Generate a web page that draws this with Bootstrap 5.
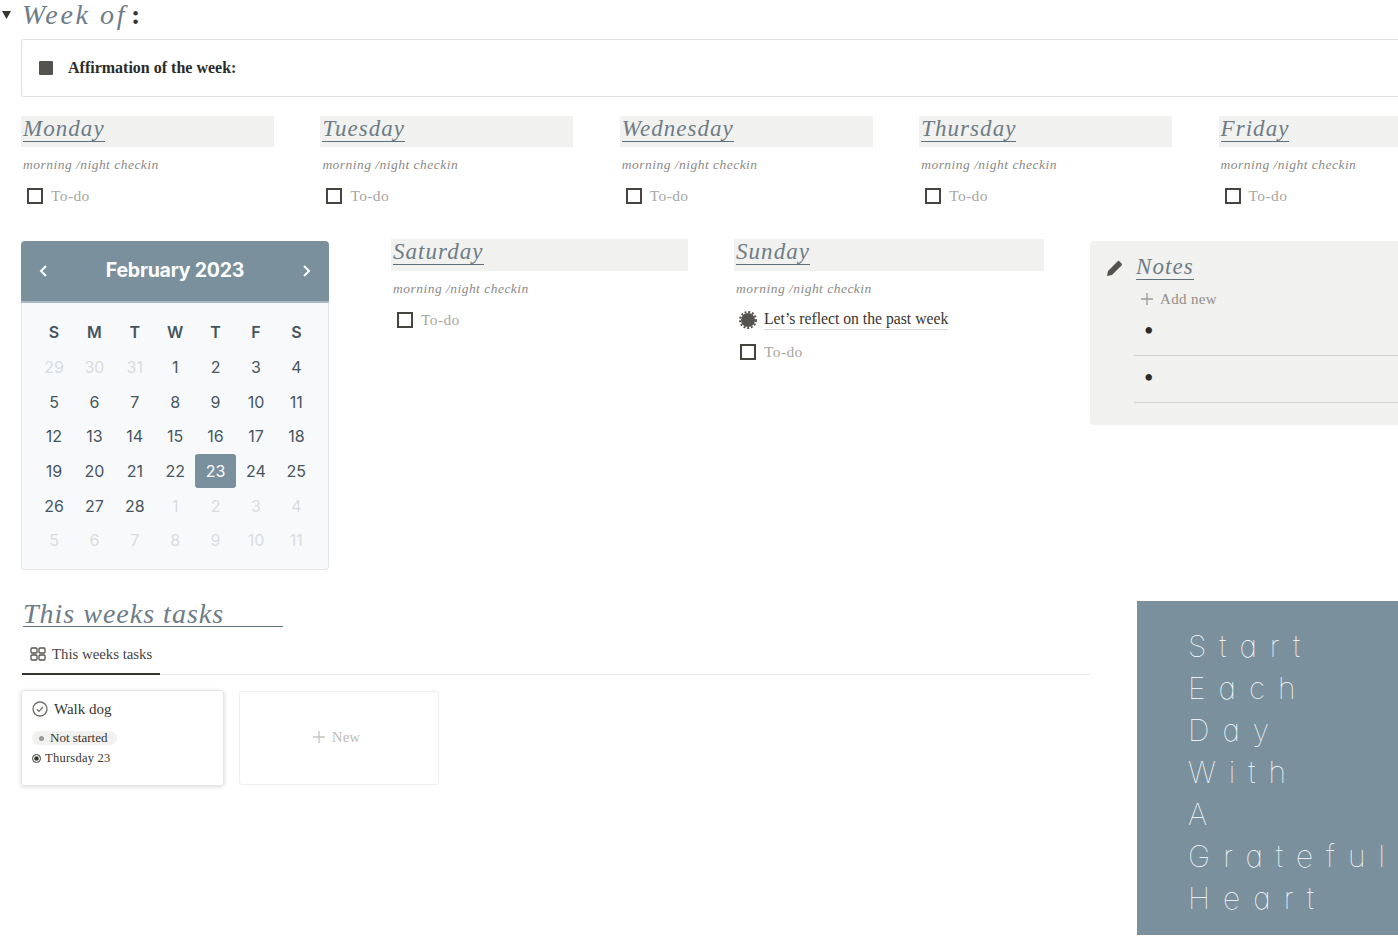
<!DOCTYPE html>
<html lang="en">
<head>
<meta charset="utf-8">
<title>Week of</title>
<link href="https://cdn.jsdelivr.net/npm/bootstrap@5.3.0/dist/css/bootstrap.min.css" rel="stylesheet">
<style>
html,body{height:948px;overflow:hidden;background:#fff}
body{font-family:"Liberation Serif",serif;color:#37352f}
.pageroot{width:1480px;padding-left:21px}
.wk-title{height:39px;margin-left:-21px;gap:10px;padding-left:2px;padding-bottom:10px}
.wk-title h1{font:italic 400 28px/30px "Liberation Serif",serif;letter-spacing:2.6px;color:#6d7c86;margin:0}
.wk-title b{font-style:normal;color:#37352f;margin-left:4px}
.affirm{height:58px;border:1px solid #e0e0df;border-radius:3px;padding-left:17px;gap:15px;font:700 16px "Liberation Serif",serif;color:#2c2b28}
.sq{width:14px;height:14px;background:#55534e;border-radius:1px}
.dayrow{margin-top:19px;gap:46.4px}
.daycol{width:253px}
.dayhead{height:31px;background:#f1f1ef;padding:0 2px}
.dayhead span{display:inline-block;height:26px;font:italic 400 23px/25px "Liberation Serif",serif;letter-spacing:1.05px;color:#6d7c86;border-bottom:1px solid #5f717c}
.sub{font:italic 400 13.5px/16px "Liberation Serif",serif;color:#8b8a86;margin:10px 0 0 2px;letter-spacing:.48px}
.todo{font-size:15.5px;line-height:20px;color:#a8a7a3;margin:13px 0 0 6px;gap:8px;letter-spacing:.38px}
.cbox{width:16px;height:16px;border:2px solid #45443f;flex:none}
.midrow{margin-top:33px}
.calbox{width:308px;margin-top:2px;flex:none;font-family:Inter,sans-serif}
.calhead{height:62px;background:#7a909d;border-bottom:2px solid #a9b8c1;border-radius:4px 4px 0 0;color:#fff;font-size:19.500px;font-weight:700;padding:0 17px;letter-spacing:-.2px}
.calgrid{display:grid;grid-template-columns:repeat(7,40.4px);grid-auto-rows:34.7px;padding:12px 11.8px;height:267px;background:#f8f9fb;border:1px solid #e3e6e8;border-top:0;border-radius:0 0 4px 4px;color:#45555f;font-size:16px;text-align:center}
.calgrid>div{display:flex;align-items:center;justify-content:center}
.calgrid .dn{font-weight:600}
.calgrid .dimday{color:#d9dcde}
.calgrid .pick{background:#7a909d;color:#fff;border-radius:3px}
.satcol{width:297px;margin-left:62px}
.suncol{width:310px;margin-left:46px}
.satcol .dayhead,.suncol .dayhead{height:32px}
.reflect{color:#37352f;margin-top:12px;margin-left:5px;gap:7px;font-size:15.7px;line-height:20px}
.reflect span{border-bottom:1px solid #d9d9d7}
.suncol .todo{margin-top:12px}
.notes{width:340px;height:184px;margin:2px 0 0 46px;background:#f1f1ef;border-radius:4px;padding:13px 0 0 16px;flex:none}
.notes h2{font:italic 400 23px/25px "Liberation Serif",serif;letter-spacing:1.05px;color:#6d7c86;border-bottom:1px solid #5f717c;margin:0 0 1px 3px;display:inline-block}
.addnew{font-size:15px;color:#8f8e8a;margin:8px 0 0 34px;gap:6px;line-height:20px;letter-spacing:.35px}
.noterow{height:47px;margin-left:28px;border-bottom:1px solid #d2d2d0;padding:12px 0 0 10px;font-size:27px;line-height:20px;color:#2c2b28}
.lowrow{margin-top:31px}
.taskside{width:1069px;flex:none}
.taskhead{width:260px;font:italic 400 28px/26px "Liberation Serif",serif;letter-spacing:1px;color:#6d7c86;border-bottom:1px solid #5f717c;margin:0 0 0 2px;height:26px}
.tabline{border-bottom:1px solid #e9e9e7;height:48px}
.tabon{width:138px;margin-left:1px;height:48px;border-bottom:2px solid #37352f;padding:8px 0 0 8px;gap:6px;font-size:14.8px;color:#45443f}
.cardrow{margin-top:15px;gap:15px}
.taskcard{width:203px;height:96px;border:1px solid #e6e6e4;border-radius:3px;box-shadow:0 1px 4px rgba(15,15,15,.16);padding:8px 10px}
.cardname{font-size:15px;gap:6px;line-height:20px;color:#37352f}
.pill{background:#f1f1ef;border-radius:8px;height:14px;width:85px;margin-top:12px;padding-left:7px;gap:6px;font-size:13px;color:#37352f}
.pdot{width:5px;height:5px;border-radius:50%;background:#9b9a97}
.dateln{font-size:12.5px;margin-top:6px;gap:4px;letter-spacing:.25px;line-height:15px}
.newcard{width:200px;height:94px;margin-top:1px;border:1px solid #eeeeed;border-radius:3px;color:#bdbcb9;font-size:15px;gap:6px;padding:0 6px 2px 0}
.quote{width:300px;height:334px;margin-left:47px;background:#7a909d;color:#fff;padding:24px 0 0 51px;flex:none;font:100 30px/42px Inter,sans-serif;letter-spacing:13px;font-feature-settings:"cv11"}
</style>
</head>
<body>
<div class="pageroot">
  <div class="wk-title d-flex align-items-center">
    <svg width="10" height="8" viewBox="0 0 10 8"><path d="M0 0h9L4.500 8z" fill="#37352f"/></svg>
    <h1>Week of<b>:</b></h1>
  </div>
  <div class="affirm d-flex align-items-center"><span class="sq"></span><span>Affirmation of the week:</span></div>

  <div class="dayrow d-flex">
    <div class="daycol"><div class="dayhead"><span>Monday</span></div><div class="sub">morning /night checkin</div><div class="todo d-flex align-items-center"><span class="cbox"></span>To-do</div></div>
    <div class="daycol"><div class="dayhead"><span>Tuesday</span></div><div class="sub">morning /night checkin</div><div class="todo d-flex align-items-center"><span class="cbox"></span>To-do</div></div>
    <div class="daycol"><div class="dayhead"><span>Wednesday</span></div><div class="sub">morning /night checkin</div><div class="todo d-flex align-items-center"><span class="cbox"></span>To-do</div></div>
    <div class="daycol"><div class="dayhead"><span>Thursday</span></div><div class="sub">morning /night checkin</div><div class="todo d-flex align-items-center"><span class="cbox"></span>To-do</div></div>
    <div class="daycol"><div class="dayhead"><span>Friday</span></div><div class="sub">morning /night checkin</div><div class="todo d-flex align-items-center"><span class="cbox"></span>To-do</div></div>
  </div>

  <div class="midrow d-flex align-items-start">
    <div class="calbox">
      <div class="calhead d-flex align-items-center justify-content-between">
        <svg width="10" height="14" viewBox="0 0 10 14"><path d="M8 2 3 7l5 5" fill="none" stroke="#fff" stroke-width="2"/></svg>
        <span>February 2023</span>
        <svg width="10" height="14" viewBox="0 0 10 14"><path d="M2 2l5 5-5 5" fill="none" stroke="#fff" stroke-width="2"/></svg>
      </div>
      <div class="calgrid">
        <div class="dn">S</div><div class="dn">M</div><div class="dn">T</div><div class="dn">W</div><div class="dn">T</div><div class="dn">F</div><div class="dn">S</div>
        <div class="dimday">29</div><div class="dimday">30</div><div class="dimday">31</div><div>1</div><div>2</div><div>3</div><div>4</div>
        <div>5</div><div>6</div><div>7</div><div>8</div><div>9</div><div>10</div><div>11</div>
        <div>12</div><div>13</div><div>14</div><div>15</div><div>16</div><div>17</div><div>18</div>
        <div>19</div><div>20</div><div>21</div><div>22</div><div class="pick">23</div><div>24</div><div>25</div>
        <div>26</div><div>27</div><div>28</div><div class="dimday">1</div><div class="dimday">2</div><div class="dimday">3</div><div class="dimday">4</div>
        <div class="dimday">5</div><div class="dimday">6</div><div class="dimday">7</div><div class="dimday">8</div><div class="dimday">9</div><div class="dimday">10</div><div class="dimday">11</div>
      </div>
    </div>

    <div class="satcol"><div class="dayhead"><span>Saturday</span></div><div class="sub">morning /night checkin</div><div class="todo d-flex align-items-center"><span class="cbox"></span>To-do</div></div>

    <div class="suncol">
      <div class="dayhead"><span>Sunday</span></div><div class="sub">morning /night checkin</div>
      <div class="reflect d-flex align-items-center">
        <svg width="18" height="18" viewBox="0 0 18 18"><circle cx="9" cy="9" r="7" fill="#55534e"/><circle cx="9" cy="9" r="8" fill="none" stroke="#55534e" stroke-width="2" stroke-dasharray="2 1.770"/></svg>
        <span>Let’s reflect on the past week</span>
      </div>
      <div class="todo d-flex align-items-center"><span class="cbox"></span>To-do</div>
    </div>

    <div class="notes">
      <div class="d-flex align-items-center gap-2">
        <svg width="18" height="18" viewBox="0 0 18 18"><path d="M1 17l1-5L12.500 1.500l3.500 3.500-0.500 1.500L6 16z" fill="#55534e"/></svg>
        <h2 class="ms-1">Notes</h2>
      </div>
      <div class="addnew d-flex align-items-center">
        <svg width="14" height="14" viewBox="0 0 14 14"><path d="M7 1v12M1 7h12" stroke="#9b9a97" stroke-width="1.300"/></svg>
        Add new
      </div>
      <div class="noterow">•</div>
      <div class="noterow">•</div>
    </div>
  </div>

  <div class="lowrow d-flex align-items-start">
    <div class="taskside">
      <h2 class="taskhead">This weeks tasks</h2>
      <div class="tabline">
        <div class="tabon d-flex align-items-center">
          <svg width="16" height="14" viewBox="0 0 16 14" fill="none" stroke="#55534e" stroke-width="1.300"><rect x="1" y="1" width="6" height="5" rx="1"/><rect x="9" y="1" width="6" height="5" rx="1"/><rect x="1" y="8" width="6" height="5" rx="1"/><rect x="9" y="8" width="6" height="5" rx="1"/></svg>
          This weeks tasks
        </div>
      </div>
      <div class="cardrow d-flex align-items-start">
        <div class="taskcard">
          <div class="cardname d-flex align-items-center">
            <svg width="16" height="16" viewBox="0 0 16 16" fill="none" stroke="#6f6e69" stroke-width="1.300"><circle cx="8" cy="8" r="7"/><path d="M4.800 8.200l2.200 2.200 4-4.400"/></svg>
            Walk dog
          </div>
          <div class="pill d-flex align-items-center"><span class="pdot"></span>Not started</div>
          <div class="dateln d-flex align-items-center">
            <svg width="9" height="9" viewBox="0 0 9 9"><circle cx="4.500" cy="4.500" r="4" fill="none" stroke="#37352f"/><circle cx="4.500" cy="4.500" r="2.300" fill="#37352f"/></svg>
            Thursday 23
          </div>
        </div>
        <div class="newcard d-flex align-items-center justify-content-center">
          <svg width="14" height="14" viewBox="0 0 14 14"><path d="M7 1v12M1 7h12" stroke="#c4c3c0" stroke-width="1.300"/></svg>
          New
        </div>
      </div>
    </div>
    <div class="quote">Start<br>Each<br>Day<br>With<br>A<br>Grateful<br>Heart</div>
  </div>
</div>
</body>
</html>
